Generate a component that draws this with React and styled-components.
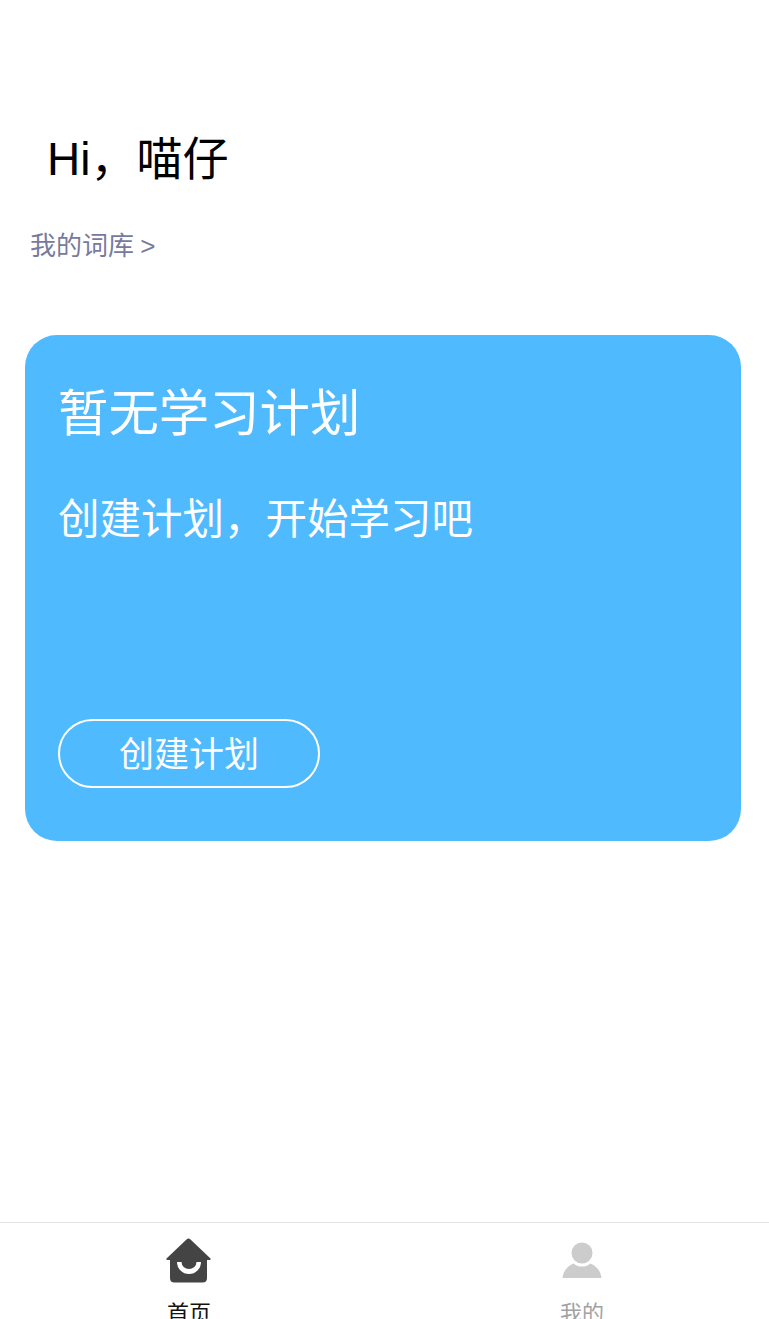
import React from "react";
import styled, { createGlobalStyle } from "styled-components";

const Global = createGlobalStyle`
  html, body { margin: 0; padding: 0; background: #fff; }
  body { font-family: "Liberation Sans", "Noto Sans CJK SC", sans-serif; overflow: hidden; }
`;

const Page = styled.div`
  width: 769px;
  height: 1319px;
  display: flex;
  flex-direction: column;
  overflow: hidden;
`;

const Main = styled.main`
  flex: 1;
  display: flex;
  flex-direction: column;
  padding: 130px 28px 0 25px;
`;

const Greeting = styled.h1`
  margin: 0 0 0 22px;
  font-size: 46px;
  line-height: 58px;
  font-weight: 400;
  color: #000;
`;

const Library = styled.div`
  margin: 41px 0 0 5px;
  font-size: 26px;
  line-height: 34px;
  word-spacing: -1px;
  color: #777a9c;
`;

const Card = styled.section`
  margin-top: 72px;
  height: 506px;
  box-sizing: border-box;
  padding: 47px 33px 53px;
  border-radius: 32px;
  background: #50baff;
  color: #fff;
  display: flex;
  flex-direction: column;
  align-items: flex-start;
`;

const CardTitle = styled.h2`
  margin: 0;
  font-size: 50.4px;
  line-height: 64px;
  font-weight: 400;
`;

const CardText = styled.p`
  margin: 47px 0 0;
  font-size: 41.5px;
  line-height: 54px;
`;

const PlanButton = styled.button`
  margin-top: auto;
  width: 262px;
  height: 69px;
  box-sizing: border-box;
  border: 2.5px solid #fff;
  border-radius: 35px;
  background: transparent;
  color: #fff;
  font-family: inherit;
  font-size: 35px;
  line-height: 60px;
  padding: 3px 0 0;
`;

const TabBar = styled.nav`
  height: 97px;
  flex: none;
  box-sizing: border-box;
  border-top: 1px solid #e3e3e3;
  display: flex;
  gap: 299px;
  padding-left: 142px;
  background: #fff;
  overflow: hidden;
`;

const Tab = styled.div`
  width: 94px;
  display: flex;
  flex-direction: column;
  align-items: center;
  padding-top: 15px;
  font-size: 22px;
  line-height: 30px;
  color: ${(p) => (p.$active ? "#111" : "#a3a3a3")};
`;

const TabIcon = styled.svg`
  width: 46px;
  height: 46px;
  margin-bottom: 15px;
  flex: none;
`;

const HomeIcon = () => (
  <TabIcon viewBox="0 0 46 46">
    <path
      d="M22.500 0.500 Q23.500 0.500 24.500 1.500 L44.500 20.500 Q45 21.500 44 22 L41 22 L41 40 Q41 44.500 36.500 44.500 L8.500 44.500 Q4 44.500 4 40 L4 22 L1 22 Q0 21.500 0.500 20.500 L20.500 1.500 Q21.500 0.500 22.500 0.500 Z"
      fill="#444444"
    />
    <path d="M11 24 A12 12 0 0 0 35 24 L30.500 24 A7.500 7 0 0 1 15.500 24 Z" fill="#fff" />
  </TabIcon>
);

const UserIcon = () => (
  <TabIcon viewBox="0 0 46 46">
    <circle cx="23" cy="15" r="10.500" fill="#cccccc" />
    <path
      d="M3.500 40 C4.500 32.500 8.500 28 14.500 25.500 C17.500 28 20 28.500 23 28.500 C26 28.500 28.500 28 31.500 25.500 C37.500 28 41.500 32.500 42.500 40 Z"
      fill="#cccccc"
    />
  </TabIcon>
);

export default function App() {
  return (
    <Page>
      <Global />
      <Main>
        <Greeting>Hi，喵仔</Greeting>
        <Library>我的词库 &gt;</Library>
        <Card>
          <CardTitle>暂无学习计划</CardTitle>
          <CardText>创建计划，开始学习吧</CardText>
          <PlanButton>创建计划</PlanButton>
        </Card>
      </Main>
      <TabBar>
        <Tab $active>
          <HomeIcon />
          首页
        </Tab>
        <Tab>
          <UserIcon />
          我的
        </Tab>
      </TabBar>
    </Page>
  );
}
